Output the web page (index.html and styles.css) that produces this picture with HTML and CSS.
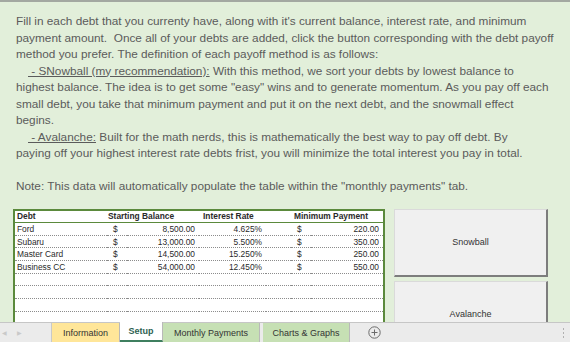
FILE: index.html
```
<!DOCTYPE html>
<html>
<head>
<meta charset="utf-8">
<link rel="stylesheet" href="styles.css">
</head>
<body>
<div class="app">
  <div class="sheet">
    <div class="topline"></div>
    <div class="notes">
      <div class="ln">Fill in each debt that you currenty have, along with it's current balance, interest rate, and minimum</div>
      <div class="ln">payment amount.&nbsp; Once all of your debts are added, click the button corresponding with the debt payoff</div>
      <div class="ln">method you prefer. The definition of each payoff method is as follows:</div>
      <div class="ln"><span class="indent"></span><span class="ul">&nbsp;- SNowball (my recommendation):</span> With this method, we sort your debts by lowest balance to</div>
      <div class="ln">highest balance. The idea is to get some "easy" wins and to generate momentum. As you pay off each</div>
      <div class="ln">small debt, you take that minimum payment and put it on the next debt, and the snowmall effect</div>
      <div class="ln">begins.</div>
      <div class="ln"><span class="indent"></span><span class="ul">&nbsp;- Avalanche:</span> Built for the math nerds, this is mathematically the best way to pay off debt. By</div>
      <div class="ln">paying off your highest interest rate debts frist, you will minimize the total interest you pay in total.</div>
      <div class="ln">&nbsp;</div>
      <div class="ln">Note: This data will automatically populate the table within the "monthly payments" tab.</div>
    </div>
    <div class="work">
      <table class="debts">
        <colgroup>
          <col class="c-debt"><col class="c-sym"><col class="c-bal"><col class="c-rate"><col class="c-gap"><col class="c-sym2"><col class="c-min">
        </colgroup>
        <thead>
          <tr><th>Debt</th><th colspan="2" class="h-bal">Starting Balance</th><th class="h-rate">Interest Rate</th><th></th><th colspan="2" class="h-min">Minimum Payment</th></tr>
        </thead>
        <tbody>
          <tr><td>Ford</td><td class="sym">$</td><td class="num">8,500.00</td><td class="num">4.625%</td><td></td><td class="sym">$</td><td class="num">220.00</td></tr>
          <tr><td>Subaru</td><td class="sym">$</td><td class="num">13,000.00</td><td class="num">5.500%</td><td></td><td class="sym">$</td><td class="num">350.00</td></tr>
          <tr><td>Master Card</td><td class="sym">$</td><td class="num">14,500.00</td><td class="num">15.250%</td><td></td><td class="sym">$</td><td class="num">250.00</td></tr>
          <tr><td>Business CC</td><td class="sym">$</td><td class="num">54,000.00</td><td class="num">12.450%</td><td></td><td class="sym">$</td><td class="num">550.00</td></tr>
          <tr><td></td><td></td><td></td><td></td><td></td><td></td><td></td></tr>
          <tr><td></td><td></td><td></td><td></td><td></td><td></td><td></td></tr>
          <tr><td></td><td></td><td></td><td></td><td></td><td></td><td></td></tr>
          <tr><td></td><td></td><td></td><td></td><td></td><td></td><td></td></tr>
          <tr><td></td><td></td><td></td><td></td><td></td><td></td><td></td></tr>
        </tbody>
      </table>
      <div class="buttons">
        <div class="btn">Snowball</div>
        <div class="btn">Avalanche</div>
      </div>
    </div>
  </div>
  <div class="tabbar">
    <div class="nav"><span class="arr">&#9664;</span><span class="arr">&#9654;</span></div>
    <div class="tab t-info">Information</div>
    <div class="tab t-setup">Setup</div>
    <div class="tab t-month">Monthly Payments</div>
    <div class="tab t-chart">Charts &amp; Graphs</div>
    <div class="add">
      <svg width="13" height="13" viewBox="0 0 13 13"><circle cx="6.5" cy="6.5" r="5.7" fill="none" stroke="#6b6b6b" stroke-width="1"/><path d="M6.5 3.5v6M3.5 6.5h6" stroke="#6b6b6b" stroke-width="1"/></svg>
    </div>
    <div class="spacer"></div>
    <div class="dots"><span></span><span></span><span></span></div>
  </div>
</div>
</body>
</html>
```

FILE: styles.css
```
* { box-sizing: border-box; }
html, body { margin: 0; padding: 0; }
body {
  width: 570px;
  height: 342px;
  overflow: hidden;
  background: #e2efda;
  font-family: "Liberation Sans", Arial, sans-serif;
}
.app {
  display: flex;
  flex-direction: column;
  height: 342px;
}
.sheet {
  flex: 1;
  overflow: hidden;
  min-height: 0;
}
.topline {
  height: 2px;
  background: #a3a8a1;
}
.notes {
  padding: 11px 0 0 16px;
  color: #5b5b5b;
  font-size: 11.8px;
  line-height: 16.5px;
}
.ln { white-space: nowrap; }
.indent { display: inline-block; width: 12px; }
.ul { text-decoration: underline; }

.work {
  display: flex;
  align-items: flex-start;
  padding: 14px 0 0 13px;
  gap: 9px;
}
.debts {
  width: 372px;
  table-layout: fixed;
  border-collapse: collapse;
  background: #ffffff;
  border: 2px solid #5b8a3c;
  border-bottom: none;
  font-size: 8.4px;
  color: #2a2a2a;
}
.c-debt { width: 93px; }
.c-sym { width: 20px; }
.c-bal { width: 72px; }
.c-rate { width: 67px; }
.c-gap { width: 25px; }
.c-sym2 { width: 20px; }
.c-min { width: 73px; }
.debts th {
  height: 13px;
  padding: 0 0 0 2px;
  text-align: left;
  font-weight: bold;
  border-bottom: 1px solid #5b8a3c;
  white-space: nowrap;
}
.debts th.h-bal { padding-left: 1px; }
.debts th.h-rate { padding-left: 4px; }
.debts th.h-min { padding-left: 3px; }
.debts td {
  height: 12.7px;
  padding: 0 0 0 2px;
  border-bottom: 1px dotted #8c8c8c;
  white-space: nowrap;
}
.debts td.sym { padding-left: 6px; }
.debts td.num { text-align: right; padding: 0 4px 0 0; }

.buttons {
  display: flex;
  flex-direction: column;
  gap: 4px;
}
.btn {
  width: 154px;
  height: 68px;
  display: flex;
  align-items: center;
  justify-content: center;
  background: #f0f0f0;
  border-top: 1px solid #dadada;
  border-left: 1px solid #dadada;
  border-right: 2px solid #7d7d7d;
  border-bottom: 2px solid #7d7d7d;
  font-size: 9px;
  color: #333333;
}

.tabbar {
  height: 20px;
  flex: none;
  display: flex;
  align-items: stretch;
  background: #ebebeb;
  border-top: 1px solid #c6c6c6;
  font-size: 9px;
}
.nav {
  width: 52px;
  display: flex;
  align-items: center;
  gap: 10px;
  padding-left: 2px;
  color: #c9c9c9;
  font-size: 6px;
  border-right: 1px solid #c9c9c9;
}
.tab {
  display: flex;
  align-items: center;
  justify-content: center;
  color: #333333;
  border-right: 1px solid #b9b9b9;
}
.t-info { width: 68px; background: #ffe699; }
.t-setup {
  width: 43px;
  background: #ffffff;
  font-weight: bold;
  color: #2f5f52;
  border-bottom: 2px solid #3f7f5f;
  margin-top: -1px;
}
.t-month { width: 97px; background: #c6e0b4; }
.t-chart { width: 87px; background: #c6e0b4; margin-left: 3px; }
.add {
  width: 40px;
  display: flex;
  align-items: center;
  justify-content: center;
  padding-left: 8px;
}
.spacer { flex: 1; }
.dots {
  width: 14px;
  display: flex;
  flex-direction: column;
  justify-content: center;
  align-items: center;
  gap: 2px;
}
.dots span {
  width: 1px;
  height: 2px;
  background: #b0b0b0;
}
```
